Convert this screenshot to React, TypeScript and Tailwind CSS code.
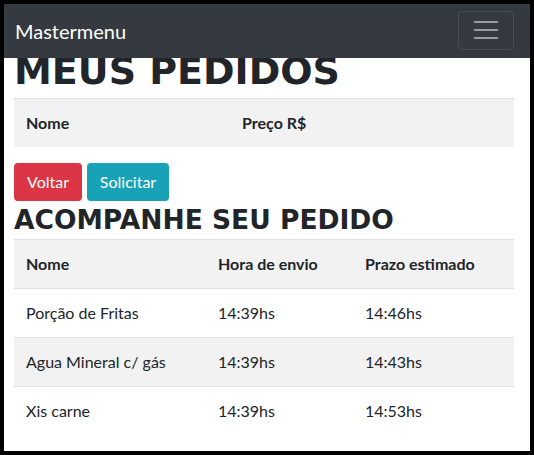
const pedidos = [
  { nome: "Porção de Fritas", envio: "14:39hs", prazo: "14:46hs" },
  { nome: "Agua Mineral c/ gás", envio: "14:39hs", prazo: "14:43hs" },
  { nome: "Xis carne", envio: "14:39hs", prazo: "14:53hs" },
];

export default function App() {
  return (
    <div className="w-[534px] h-[455px] bg-black p-1 font-['Lato','Open_Sans',sans-serif] text-[#212529]">
      <div className="relative w-[526px] h-[447px] bg-white overflow-hidden">
        {/* Fixed navbar */}
        <nav className="absolute top-0 left-0 right-0 z-10 h-[54px] bg-[#343a40] flex items-center justify-between pl-[11px] pr-[16px]">
          <span className="text-[20px] leading-[30px] text-white">Mastermenu</span>
          <button className="w-[56px] h-[39px] mt-[-2px] rounded-[4px] border border-[rgba(255,255,255,0.1)] flex flex-col items-center justify-center gap-[6px]">
            <span className="block w-[24px] h-[2px] bg-[rgba(255,255,255,0.5)]" />
            <span className="block w-[24px] h-[2px] bg-[rgba(255,255,255,0.5)]" />
            <span className="block w-[24px] h-[2px] bg-[rgba(255,255,255,0.5)]" />
          </button>
        </nav>

        <main className="px-[10px] pt-[44px]">
          <h1 className="font-['DejaVu_Sans',sans-serif] font-bold text-[38px] leading-[46px] mb-[4px] whitespace-nowrap">
            MEUS PEDIDOS
          </h1>

          <table className="w-[500px] table-fixed border-collapse mb-[16px] text-[16px] leading-[24px]">
            <thead>
              <tr className="bg-[#f2f2f2]">
                <th className="w-[216px] text-left font-bold px-[12px] py-[12px] border-t border-[#dee2e6]">Nome</th>
                <th className="text-left font-bold px-[12px] py-[12px] border-t border-[#dee2e6]">Preço R$</th>
              </tr>
            </thead>
          </table>

          <div className="flex gap-[5px]">
            <button className="w-[68px] h-[38px] rounded-[4px] bg-[#dc3545] text-white text-[16px] leading-[24px]">Voltar</button>
            <button className="w-[82px] h-[38px] rounded-[4px] bg-[#17a2b8] text-white text-[16px] leading-[24px]">Solicitar</button>
          </div>

          <h2 className="font-['DejaVu_Sans',sans-serif] font-bold text-[26.5px] leading-[32px] mt-[3px] mb-[3px] whitespace-nowrap">
            ACOMPANHE SEU PEDIDO
          </h2>

          <table className="w-[500px] table-fixed border-collapse text-[16px] leading-[24px]">
            <thead>
              <tr className="bg-[#f2f2f2]">
                <th className="w-[192px] text-left font-bold p-[12px] border-t border-[#dee2e6]">Nome</th>
                <th className="w-[147px] text-left font-bold p-[12px] border-t border-[#dee2e6]">Hora de envio</th>
                <th className="text-left font-bold p-[12px] border-t border-[#dee2e6]">Prazo estimado</th>
              </tr>
            </thead>
            <tbody>
              {pedidos.map((p, i) => (
                <tr key={p.nome} className={i % 2 === 1 ? "bg-[#f2f2f2]" : "bg-white"}>
                  <td className="p-[12px] border-t border-[#dee2e6] whitespace-nowrap">{p.nome}</td>
                  <td className="p-[12px] border-t border-[#dee2e6]">{p.envio}</td>
                  <td className="p-[12px] border-t border-[#dee2e6]">{p.prazo}</td>
                </tr>
              ))}
            </tbody>
          </table>
        </main>
      </div>
    </div>
  );
}
